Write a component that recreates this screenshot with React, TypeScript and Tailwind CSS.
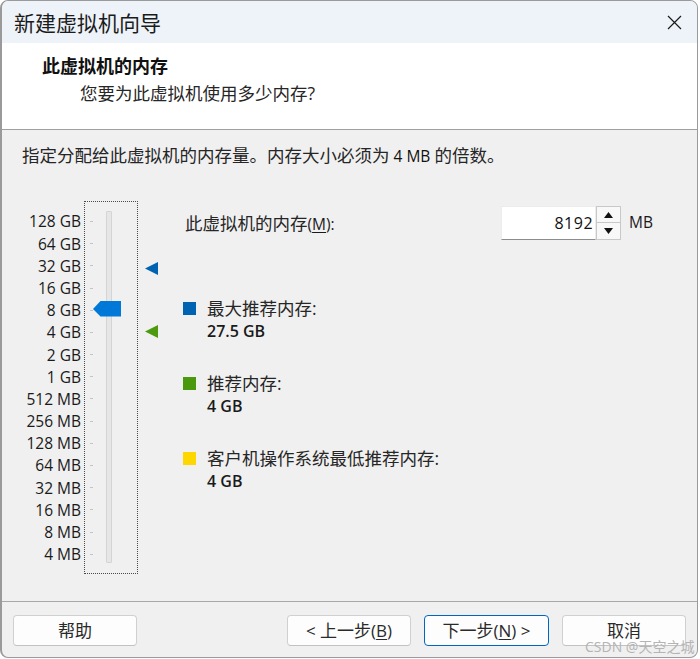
import React from "react";

const sizes = [
  "128 GB", "64 GB", "32 GB", "16 GB", "8 GB", "4 GB", "2 GB", "1 GB",
  "512 MB", "256 MB", "128 MB", "64 MB", "32 MB", "16 MB", "8 MB", "4 MB",
];

function LeftTriangle({ color }: { color: string }) {
  return (
    <svg width="13" height="13" viewBox="0 0 13 13" className="block">
      <polygon points="13,0 13,13 0,6.5" fill={color} />
    </svg>
  );
}

function Legend({ color, label, value, className }: { color: string; label: string; value: string; className?: string }) {
  return (
    <div className={"flex items-start " + (className ?? "")}>
      <div className="w-[13px] h-[13px] mt-[5px] shrink-0" style={{ backgroundColor: color }} />
      <div className="ml-[11px] flex flex-col">
        <div className="h-[23px] leading-[23px] text-[17.5px] text-[#262626]">{label}</div>
        <div className="h-[23px] leading-[23px] text-[16px] font-semibold text-[#1a1a1a]">{value}</div>
      </div>
    </div>
  );
}

function Button({ children, primary }: { children: React.ReactNode; primary?: boolean }) {
  return (
    <div
      className={
        "h-[31px] flex items-center justify-center rounded-[4px] border bg-[#fdfdfd] text-[17px] text-[#2a2a2a] " +
        (primary ? "w-[125px] border-[#0067c0]" : "w-[124px] border-[#d0d0d0] border-b-[#c2c2c2]")
      }
    >
      {children}
    </div>
  );
}

export default function App() {
  return (
    <div className="w-[700px] h-[659px] bg-white relative font-['Open_Sans','Noto_Sans_CJK_SC',sans-serif]">
      <div className="w-[698px] h-[658px] border border-[#9a9a9a] border-l-2 rounded-[8px] overflow-hidden flex flex-col bg-[#f0f0f0]">
        {/* title bar */}
        <div className="h-[42px] shrink-0 bg-[#eef3f9] flex items-center justify-between pl-[12px] pr-[15px]">
          <span className="text-[21px] leading-[28px] text-[#1b1b1b] font-['Noto_Sans_CJK_SC',sans-serif]">新建虚拟机向导</span>
          <svg width="15" height="15" viewBox="0 0 15 15">
            <path d="M1 1 L14 14 M14 1 L1 14" stroke="#1a1a1a" strokeWidth="1.2" />
          </svg>
        </div>

        {/* page header */}
        <div className="h-[87px] shrink-0 bg-white border-b border-[#a0a0a0] pt-[11px]">
          <div className="pl-[40px] text-[18px] leading-[24px] font-bold text-[#111]">此虚拟机的内存</div>
          <div className="pl-[78px] mt-[3px] text-[17.5px] leading-[24px] text-[#262626]">您要为此虚拟机使用多少内存?</div>
        </div>

        {/* body */}
        <div className="flex-1 pt-[13px]">
          <div className="pl-[20px] text-[17.5px] leading-[24px] text-[#262626]">
            指定分配给此虚拟机的内存量。内存大小必须为<span className="text-[15.5px] text-[#111]"> 4 MB </span>的倍数。
          </div>

          <div className="mt-[33px] flex items-start">
            {/* scale labels */}
            <div className="w-[79px] pt-[9.4px] flex flex-col items-end">
              {sizes.map((s) => (
                <div key={s} className="h-[22.2px] leading-[22.2px] text-[15.5px] text-[#1a1a1a] whitespace-nowrap">
                  {s}
                </div>
              ))}
            </div>

            {/* slider */}
            <div className="ml-[3px] w-[54px] h-[373px] border border-dotted border-[#4a4a4a] relative flex items-start">
              <div className="ml-[5px] pt-[8.4px] flex flex-col">
                {sizes.map((s) => (
                  <div key={s} className="h-[22.2px] flex items-center">
                    <div className="w-[3px] h-[1px] bg-[#c4c4c4]" />
                  </div>
                ))}
              </div>
              <div className="ml-[13px] mt-[9px] w-[6px] h-[352px] bg-[#e6e6e6] border border-[#d4d4d4] rounded-[1px]" />
              <svg width="29" height="16" viewBox="0 0 29 16" className="absolute left-[8px] top-[99px]">
                <polygon points="0,8 7.5,0 28,0 28,15.5 7.5,15.5" fill="#0078d7" />
              </svg>
            </div>

            {/* recommendation markers */}
            <div className="ml-[7px] w-[13px] flex flex-col">
              <div className="mt-[61px]">
                <LeftTriangle color="#0063b1" />
              </div>
              <div className="mt-[49.5px]">
                <LeftTriangle color="#4c9a0e" />
              </div>
            </div>

            {/* memory settings */}
            <div className="ml-[25px] flex-1 pr-[44px] flex flex-col">
              <div className="mt-[5px] h-[34px] flex items-center">
                <span className="pl-[2px] text-[17.5px] text-[#262626]">
                  此虚拟机的内存<span className="text-[15.5px] text-[#1a1a1a]">(<span className="underline underline-offset-2">M</span>):</span>
                </span>
                <div className="ml-auto flex h-[34px]">
                  <div className="w-[95px] h-[34px] bg-white border border-[#ececec] border-b-[#8c8c8c] flex items-center justify-end pr-[2px] text-[16px] tracking-[0.5px] text-[#111]">
                    8192
                  </div>
                  <div className="w-[25px] h-[34px] flex flex-col">
                    <div className="h-[17px] bg-[#f8f8f8] border border-[#c8c8c8] flex items-center justify-center">
                      <svg width="9" height="6" viewBox="0 0 9 6"><polygon points="4.5,0 9,6 0,6" fill="#111" /></svg>
                    </div>
                    <div className="h-[17px] bg-[#f8f8f8] border border-t-0 border-[#c8c8c8] flex items-center justify-center">
                      <svg width="9" height="6" viewBox="0 0 9 6"><polygon points="0,0 9,0 4.5,6" fill="#111" /></svg>
                    </div>
                  </div>
                </div>
                <span className="ml-[8px] text-[15.5px] text-[#1a1a1a]">MB</span>
              </div>

              <Legend className="mt-[57px]" color="#0063b1" label="最大推荐内存:" value="27.5 GB" />
              <Legend className="mt-[29px]" color="#4a980c" label="推荐内存:" value="4 GB" />
              <Legend className="mt-[29px]" color="#ffd700" label="客户机操作系统最低推荐内存:" value="4 GB" />
            </div>
          </div>
        </div>

        {/* footer */}
        <div className="h-[56px] shrink-0 border-t border-[#a8a8a8] pt-[13px] pl-[11px] pr-[11px] flex items-start justify-between">
          <Button>帮助</Button>
          <div className="flex gap-[13px]">
            <Button>
              <span>&lt; 上一步(<span className="underline underline-offset-2">B</span>)</span>
            </Button>
            <Button primary>
              <span>下一步(<span className="underline underline-offset-2">N</span>) &gt;</span>
            </Button>
            <Button>取消</Button>
          </div>
        </div>
      </div>

      <div className="absolute left-[585px] top-[639px] text-[14px] leading-[16px] text-[#b4b4b4] whitespace-nowrap">
        CSDN @天空之城
      </div>
    </div>
  );
}
